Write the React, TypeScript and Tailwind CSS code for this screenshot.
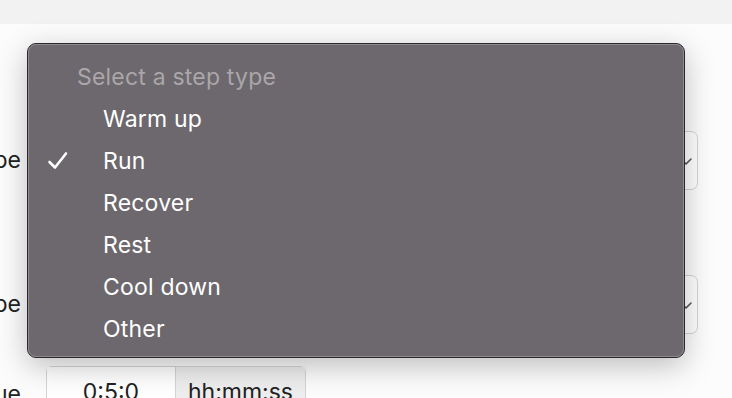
import React from "react";

const items = ["Warm up", "Run", "Recover", "Rest", "Cool down", "Other"];

function Chevron() {
  return (
    <svg width="16" height="16" viewBox="0 0 16 16" fill="none">
      <path d="M3 6l5 5 5-5" stroke="#555" strokeWidth="1.6" strokeLinecap="round" strokeLinejoin="round" />
    </svg>
  );
}

export default function App() {
  return (
    <div
      className="relative w-[732px] h-[398px] overflow-hidden bg-[#fcfcfc] text-[#222]"
      style={{ fontFamily: "Inter, 'Liberation Sans', sans-serif" }}
    >
      <div className="h-[24px] bg-[#f2f2f2]" />
      <div className="flex flex-col">
        <div className="mt-[107px] flex h-[59px] items-center">
          <div className="flex w-[21px] justify-end overflow-hidden whitespace-nowrap text-[23px]">Type</div>
          <div className="ml-[25px] flex h-[59px] w-[652px] items-center justify-end rounded-[7px] border border-[#d4d4d4] bg-white pr-[3px]">
            <Chevron />
          </div>
        </div>
        <div className="mt-[85px] flex h-[59px] items-center">
          <div className="flex w-[21px] justify-end overflow-hidden whitespace-nowrap text-[23px]">Type</div>
          <div className="ml-[25px] flex h-[59px] w-[652px] items-center justify-end rounded-[7px] border border-[#d4d4d4] bg-white pr-[3px]">
            <Chevron />
          </div>
        </div>
        <div className="mt-[32px] flex items-start">
          <div className="flex w-[21px] justify-end overflow-hidden whitespace-nowrap pt-[11px] text-[23px]">Value</div>
          <div className="ml-[25px] flex h-[50px] rounded-[6px] border border-[#d4d4d4]">
            <div className="flex w-[128px] justify-center bg-white pt-[8px] text-[23px]">0:5:0</div>
            <div className="flex w-[130px] justify-center border-l border-[#d4d4d4] bg-[#eeeeee] pt-[8px] text-[23px]">hh:mm:ss</div>
          </div>
        </div>
      </div>

      <div className="absolute left-[27px] top-[43px] flex h-[315px] w-[658px] flex-col rounded-[9px] border border-[#2a282a] bg-[#6d686d] pt-[12px] shadow-[0_8px_30px_rgba(0,0,0,0.25)]">
        <div className="pointer-events-none absolute inset-0 rounded-[8px] border border-[#8e8a8e]" />
        <div className="flex h-[42px] items-center pl-[49px] text-[23px] tracking-[0.2px] text-[#aaa6aa]">Select a step type</div>
        {items.map((it) => (
          <div key={it} className="relative flex h-[42px] items-center pl-[75px] text-[23px] tracking-[0.2px] text-white">
            {it === "Run" && (
              <svg className="absolute left-[19px] top-[11px]" width="22" height="20" viewBox="0 0 22 20" fill="none">
                <path d="M2.5 11l5.5 5.5L19 2.5" stroke="white" strokeWidth="2.6" strokeLinecap="round" strokeLinejoin="round" />
              </svg>
            )}
            {it}
          </div>
        ))}
      </div>
    </div>
  );
}
